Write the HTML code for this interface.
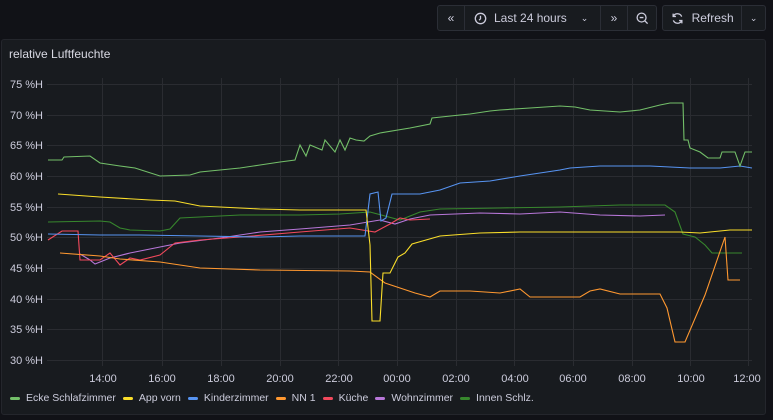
<!DOCTYPE html>
<html><head><meta charset="utf-8"><style>
body{margin:0;width:773px;height:420px;background:#111217;font-family:"Liberation Sans",sans-serif;overflow:hidden;position:relative;color:#ccccdc}
.btn{position:absolute;top:5px;height:26px;border:1px solid #2b2e36;background:#181b1f;border-radius:3px;box-sizing:border-box;display:flex;align-items:center;font-size:12px;color:#ccccdc}
.seg{height:100%;display:flex;align-items:center;justify-content:center;border-right:1px solid #2b2e36;box-sizing:border-box}
.seg:last-child{border-right:none}
.panel{position:absolute;left:1px;top:39px;width:765px;height:376px;background:#181b1f;border:1px solid #24262c;border-radius:3px;box-sizing:border-box}
.title{position:absolute;left:7px;top:7px;font-size:12px;color:#d8d9e3;font-weight:500}
.legend{position:absolute;top:392px;font-size:10.5px;color:#ccccdc;display:flex;align-items:center;left:10px}
.legend span{display:inline-block;width:10px;height:3px;border-radius:2px;margin-right:6px}
.legend b{font-weight:normal;margin-right:7px}
</style></head><body>
<div class="btn" style="left:437px;width:220px">
 <div class="seg" style="width:27px">«</div>
 <div class="seg" style="width:136px;justify-content:flex-start;padding-left:9px">
  <svg width="13" height="13" viewBox="0 0 14 14"><circle cx="7" cy="7" r="5.6" fill="none" stroke="#ccccdc" stroke-width="1.4"/><path d="M7 4v3.3l-1.5 1.5" fill="none" stroke="#ccccdc" stroke-width="1.4"/></svg>
  <span style="margin-left:7px">Last 24 hours</span><span style="margin-left:14px;font-size:9px">⌄</span></div>
 <div class="seg" style="width:27px">»</div>
 <div class="seg" style="width:28px"><svg width="13" height="13" viewBox="0 0 14 14"><circle cx="6" cy="6" r="4.8" fill="none" stroke="#ccccdc" stroke-width="1.4"/><path d="M4 6h4M9.5 9.5l3 3" stroke="#ccccdc" stroke-width="1.4"/></svg></div>
</div>
<div class="btn" style="left:662px;width:104px">
 <div class="seg" style="width:80px"><svg width="13" height="13" viewBox="0 0 14 14"><path d="M11.5 5A5 5 0 0 0 2.5 4.5M2.5 9A5 5 0 0 0 11.5 9.5" fill="none" stroke="#ccccdc" stroke-width="1.4"/><path d="M2.3 1.8v3h3M11.7 12.2v-3h-3" fill="none" stroke="#ccccdc" stroke-width="1.4"/></svg><span style="margin-left:8px">Refresh</span></div>
 <div class="seg" style="width:23px;font-size:9px">⌄</div>
</div>
<div class="panel"><div class="title">relative Luftfeuchte</div></div>
<svg style="position:absolute;left:0;top:0" width="773" height="420">
<g stroke="#2a2c31" stroke-width="1">
<path d="M47 84.5H752M47 115.5H752M47 145.5H752M47 176.5H752M47 207.5H752M47 237.5H752M47 268.5H752M47 299.5H752M47 329.5H752M47 360.5H752"/>
<path d="M102.5 78V366M162.5 78V366M221.5 78V366M280.5 78V366M338.5 78V366M397.5 78V366M456.5 78V366M514.5 78V366M573.5 78V366M632.5 78V366M690.5 78V366M748.5 78V366"/>
</g>
<g fill="#ccccdc" font-size="11" text-anchor="end">
<text x="43" y="88">75 %H</text><text x="43" y="119">70 %H</text><text x="43" y="149">65 %H</text><text x="43" y="180">60 %H</text><text x="43" y="211">55 %H</text><text x="43" y="241">50 %H</text><text x="43" y="272">45 %H</text><text x="43" y="303">40 %H</text><text x="43" y="333">35 %H</text><text x="43" y="364">30 %H</text>
</g>
<g fill="#ccccdc" font-size="11" text-anchor="middle">
<text x="103" y="382">14:00</text><text x="162" y="382">16:00</text><text x="221" y="382">18:00</text><text x="280" y="382">20:00</text><text x="339" y="382">22:00</text><text x="397" y="382">00:00</text><text x="456" y="382">02:00</text><text x="515" y="382">04:00</text><text x="573" y="382">06:00</text><text x="632" y="382">08:00</text><text x="691" y="382">10:00</text><text x="747" y="382">12:00</text>
</g>
<g fill="none" stroke-width="1.1">
<polyline stroke="#37872d" points="48,222 100,221 110,222 120,228 130,230 160,231 170,229 180,218 200,217 240,215 300,215 340,214 370,212 385,216 400,220 420,212 440,209 500,208 560,207 620,205 665,205 675,212 683,234 695,237 705,245 712,253 742,253"/>
<polyline stroke="#b877d9" points="80,254 90,260 95,264 110,258 130,253 150,249 180,243 220,238 260,232 300,229 350,225 380,220 395,224 410,219 430,215 480,213 520,214 560,212 600,215 640,216 665,215"/>
<polyline stroke="#f2495c" points="48,240 62,231 78,231 80,260 100,260 110,253 120,265 130,258 140,260 160,255 175,243 200,240 240,237 300,232 350,228 375,232 390,224 400,218 410,220 430,219"/>
<polyline stroke="#ff9830" points="60,253 100,256 120,259 160,262 200,268 260,270 350,271 370,272 385,283 400,288 415,293 430,297 440,291 470,291 500,293 520,289 530,297 580,297 590,291 600,289 620,294 660,294 667,308 675,342 685,342 705,295 725,237 728,280 740,280"/>
<polyline stroke="#5794f2" points="48,234 100,235 140,235 200,236 260,237 300,236 365,236 370,194 378,192 381,221 386,218 392,194 420,194 440,190 460,183 490,181 520,176 560,170 570,168 600,166 650,166 690,168 720,168 740,166 752,168"/>
<polyline stroke="#fade2a" points="58,194 100,197 150,200 175,201 200,206 220,207 260,209 300,210 330,210 366,210 370,245 372,321 380,321 383,273 390,273 398,257 405,253 412,244 440,236 480,233 520,232 600,232 680,232 700,233 730,230 752,230"/>
<polyline stroke="#73bf69" points="48,160 62,160 64,157 90,156 100,163 120,166 135,168 160,176 190,175 200,172 220,170 240,168 260,165 280,162 295,160 300,145 306,156 310,145 322,150 325,140 335,152 340,140 345,150 350,138 356,140 364,141 370,136 380,133 410,128 430,124 432,118 460,115 470,114 490,111 500,110 530,108 560,106 575,107 590,110 620,112 640,110 660,105 670,103 683,103 684,140 688,140 690,148 700,152 708,158 720,158 722,152 735,152 740,166 745,152 752,152"/>
</g>
</svg>
<div class="legend">
<span style="background:#73bf69"></span><b>Ecke Schlafzimmer</b>
<span style="background:#fade2a"></span><b>App vorn</b>
<span style="background:#5794f2"></span><b>Kinderzimmer</b>
<span style="background:#ff9830"></span><b>NN 1</b>
<span style="background:#f2495c"></span><b>Küche</b>
<span style="background:#b877d9"></span><b>Wohnzimmer</b>
<span style="background:#37872d"></span><b>Innen Schlz.</b>
</div>
</body></html>
